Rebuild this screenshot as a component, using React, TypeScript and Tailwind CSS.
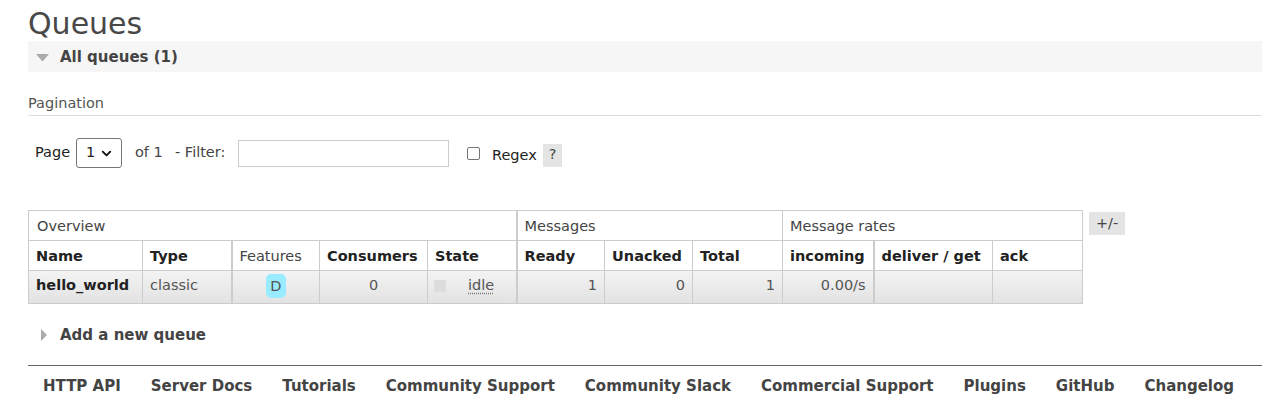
import React from "react";
import { ChevronDown } from "lucide-react";

const font = "font-['DejaVu_Sans',Verdana,sans-serif]";

type Col = { label: string; width: number; bold?: boolean; thick?: boolean };

const columns: Col[] = [
  { label: "Name", width: 114, bold: true },
  { label: "Type", width: 89, bold: true },
  { label: "Features", width: 88, thick: true },
  { label: "Consumers", width: 108, bold: true },
  { label: "State", width: 89, bold: true },
  { label: "Ready", width: 88, bold: true, thick: true },
  { label: "Unacked", width: 88, bold: true },
  { label: "Total", width: 90, bold: true },
  { label: "incoming", width: 91, bold: true },
  { label: "deliver / get", width: 119, bold: true, thick: true },
  { label: "ack", width: 90, bold: true },
];

const footerLinks = [
  "HTTP API",
  "Server Docs",
  "Tutorials",
  "Community Support",
  "Community Slack",
  "Commercial Support",
  "Plugins",
  "GitHub",
  "Changelog",
];

function TriangleDown() {
  return (
    <svg width="13" height="8" viewBox="0 0 13 8" className="shrink-0">
      <path d="M0 0 L13 0 L6.5 7.5 Z" fill="#aaaaaa" />
    </svg>
  );
}

function TriangleRight() {
  return (
    <svg width="6" height="12" viewBox="0 0 6 12" className="shrink-0">
      <path d="M0 0 L6 6 L0 12 Z" fill="#aaaaaa" />
    </svg>
  );
}

function QueuesTable() {
  return (
    <table className="w-[1054px] table-fixed border-collapse text-[14.5px]">
      <colgroup>
        {columns.map((c) => (
          <col key={c.label} style={{ width: c.width }} />
        ))}
      </colgroup>
      <thead>
        <tr className="h-[30px]">
          <th colSpan={5} className="border border-[#cccccc] pt-[3px] pl-[8px] text-left font-normal text-[#444]">
            Overview
          </th>
          <th colSpan={3} className="border border-[#cccccc] border-l-2 pt-[3px] pl-[7px] text-left font-normal text-[#444]">
            Messages
          </th>
          <th colSpan={3} className="border border-[#cccccc] pt-[3px] pl-[7px] text-left font-normal text-[#444]">
            Message rates
          </th>
        </tr>
        <tr className="h-[30px]">
          {columns.map((c) => (
            <th
              key={c.label}
              className={`border border-[#cccccc] pt-[3px] pl-[7px] text-left whitespace-nowrap ${
                c.bold ? "font-bold text-[#222]" : "font-normal text-[#444]"
              } ${c.thick ? "border-l-2" : ""}`}
            >
              {c.label}
            </th>
          ))}
        </tr>
      </thead>
      <tbody>
        <tr className="h-[33px] bg-gradient-to-b from-[#f3f3f3] to-[#e2e2e2] text-[#555] [&>td]:pb-[3px]">
          <td className="border border-[#cccccc] pl-[7px] font-bold text-[#222]">hello_world</td>
          <td className="border border-[#cccccc] pl-[7px]">classic</td>
          <td className="border border-[#cccccc] border-l-2 text-center">
            <span className="inline-flex h-[24px] w-[20px] items-center justify-center rounded-[5px] bg-[#99ebff] pt-[2px] text-[#555]">
              D
            </span>
          </td>
          <td className="border border-[#cccccc] text-center">0</td>
          <td className="border border-[#cccccc] pl-[6px]">
            <div className="flex items-center">
              <span className="h-[12px] w-[12px] bg-[#dddddd]" />
              <span className="ml-[22px] underline decoration-dotted decoration-[#777] underline-offset-[3px]">idle</span>
            </div>
          </td>
          <td className="border border-[#cccccc] border-l-2 pr-[7px] text-right">1</td>
          <td className="border border-[#cccccc] pr-[7px] text-right">0</td>
          <td className="border border-[#cccccc] pr-[7px] text-right">1</td>
          <td className="border border-[#cccccc] pr-[7px] text-right">0.00/s</td>
          <td className="border border-[#cccccc] border-l-2" />
          <td className="border border-[#cccccc]" />
        </tr>
      </tbody>
    </table>
  );
}

export default function App() {
  return (
    <div className={`${font} h-[408px] w-[1262px] overflow-hidden bg-white pl-[28px] text-[#444]`}>
      <h1 className="mt-[7px] text-[30px] leading-[34px] text-[#484848]">Queues</h1>

      <div className="flex h-[31px] items-center gap-[11px] bg-[#f6f6f6] pt-[2px] pl-[8px]">
        <TriangleDown />
        <span className="text-[15px] font-bold text-[#444]">All queues (1)</span>
      </div>

      <div className="border-b border-[#dddddd] pt-[22px] pb-[3px] text-[14.5px] leading-[18px] text-[#555]">
        Pagination
      </div>

      <div className="mt-[22px] flex h-[30px] items-center text-[14.5px] text-[#222]">
        <span className="ml-[7px] w-[35px] whitespace-nowrap">Page</span>
        <div className="ml-[6px] flex h-[30px] w-[46px] items-center justify-between rounded-[3px] border border-[#767676] pl-[9px] pr-[7px]">
          <span>1</span>
          <ChevronDown size={15} strokeWidth={3} color="#111" />
        </div>
        <span className="ml-[13px] w-[28px] whitespace-nowrap text-[#444]">of 1</span>
        <span className="ml-[12px] w-[57px] whitespace-nowrap text-[#444]">- Filter:</span>
        <div className="ml-[6px] h-[27px] w-[211px] border border-[#cccccc] bg-white" />
        <span className="ml-[18px] h-[13px] w-[13px] rounded-[2px] border border-[#767676] bg-white" />
        <span className="ml-[12px] mt-[6px] w-[46px] whitespace-nowrap">Regex</span>
        <span className="ml-[5px] mt-[4px] flex h-[23px] w-[19px] items-center justify-center bg-[#e4e4e4] text-[#444]">
          ?
        </span>
      </div>

      <div className="mt-[42px] flex items-start gap-[6px]">
        <QueuesTable />
        <span className="mt-[2px] flex h-[23px] w-[36px] items-center justify-center bg-[#e4e4e4] text-[14.5px] text-[#444]">
          +/-
        </span>
      </div>

      <div className="mt-[22px] flex h-[18px] items-center gap-[13px] pl-[13px]">
        <TriangleRight />
        <span className="text-[15px] font-bold text-[#444]">Add a new queue</span>
      </div>

      <div className="mt-[21px] border-t border-[#666666]">
        <ul className="flex h-[41px] items-center gap-[30px] pl-[15px]">
          {footerLinks.map((l) => (
            <li key={l} className="text-[15px] font-bold whitespace-nowrap text-[#444]">
              {l}
            </li>
          ))}
        </ul>
      </div>
    </div>
  );
}
